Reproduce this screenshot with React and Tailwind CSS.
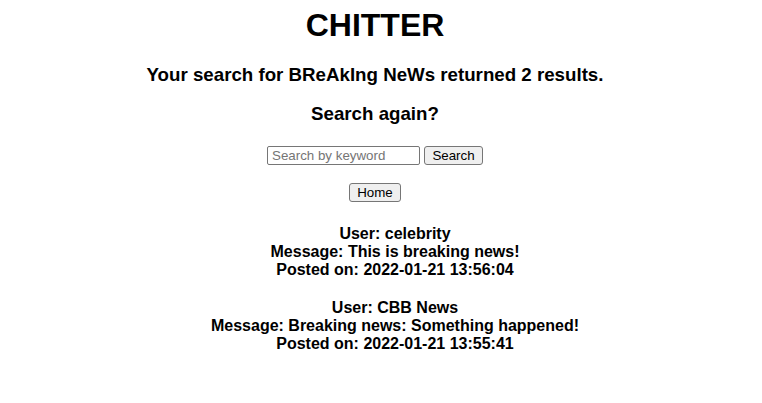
import React from "react";

const results = [
    { user: "celebrity", message: "This is breaking news!", posted: "2022-01-21 13:56:04" },
    { user: "CBB News", message: "Breaking news: Something happened!", posted: "2022-01-21 13:55:41" },
];

const App = () => {
    return (
        <div className="w-[750px] text-center text-black font-['Liberation_Sans',Arial,sans-serif]">
            <h1 className="pt-[7px] text-[32px] leading-[37px] font-bold">CHITTER</h1>
            <h3 className="mt-[20px] text-[18.72px] leading-[22px] font-bold">
                Your search for BReAkIng NeWs returned 2 results.
            </h3>
            <h3 className="mt-[17px] text-[18.72px] leading-[22px] font-bold">Search again?</h3>
            <form className="mt-[21px] flex justify-center items-center gap-[4px]" onSubmit={(e) => e.preventDefault()}>
                <input
                    type="text"
                    placeholder="Search by keyword"
                    className="w-[153px] h-[19px] px-[4px] border border-[#767676] rounded-[2px] text-[13.33px] leading-[15px] placeholder:text-[#757575] outline-none"
                />
                <button type="submit" className="w-[59px] h-[19px] border border-[#767676] rounded-[3px] bg-[#efefef] text-[13.33px] leading-[15px]">
                    Search
                </button>
            </form>
            <div className="mt-[18px] flex justify-center">
                <button className="w-[52px] h-[19px] border border-[#767676] rounded-[3px] bg-[#efefef] text-[13.33px] leading-[15px]">
                    Home
                </button>
            </div>
            <ul className="mt-[23px] pl-[40px] flex flex-col gap-[20px]">
                {results.map((r) => (
                    <li key={r.posted} className="text-[16px] leading-[18px] font-bold">
                        <div>User: {r.user}</div>
                        <div>Message: {r.message}</div>
                        <div>Posted on: {r.posted}</div>
                    </li>
                ))}
            </ul>
        </div>
    );
};

export default App;
